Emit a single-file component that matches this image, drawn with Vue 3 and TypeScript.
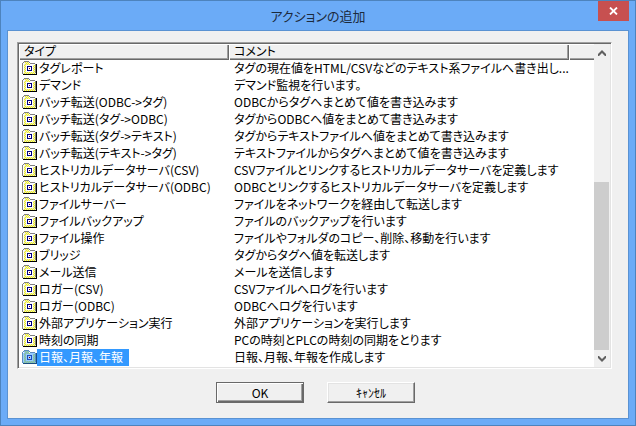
<script setup lang="ts">
import { ref } from 'vue'

interface ActionItem {
  name: string
  comment: string
}

const actions: ActionItem[] = [
  { name: 'タグレポート', comment: 'タグの現在値をHTML/CSVなどのテキスト系ファイルへ書き出し...' },
  { name: 'デマンド', comment: 'デマンド監視を行います。' },
  { name: 'バッチ転送(ODBC->タグ)', comment: 'ODBCからタグへまとめて値を書き込みます' },
  { name: 'バッチ転送(タグ->ODBC)', comment: 'タグからODBCへ値をまとめて書き込みます' },
  { name: 'バッチ転送(タグ->テキスト)', comment: 'タグからテキストファイルへ値をまとめて書き込みます' },
  { name: 'バッチ転送(テキスト->タグ)', comment: 'テキストファイルからタグへまとめて値を書き込みます' },
  { name: 'ヒストリカルデータサーバ(CSV)', comment: 'CSVファイルとリンクするヒストリカルデータサーバを定義します' },
  { name: 'ヒストリカルデータサーバ(ODBC)', comment: 'ODBCとリンクするヒストリカルデータサーバを定義します' },
  { name: 'ファイルサーバー', comment: 'ファイルをネットワークを経由して転送します' },
  { name: 'ファイルバックアップ', comment: 'ファイルのバックアップを行います' },
  { name: 'ファイル操作', comment: 'ファイルやフォルダのコピー、削除、移動を行います' },
  { name: 'ブリッジ', comment: 'タグからタグへ値を転送します' },
  { name: 'メール送信', comment: 'メールを送信します' },
  { name: 'ロガー(CSV)', comment: 'CSVファイルへログを行います' },
  { name: 'ロガー(ODBC)', comment: 'ODBCへログを行います' },
  { name: '外部アプリケーション実行', comment: '外部アプリケーションを実行します' },
  { name: '時刻の同期', comment: 'PCの時刻とPLCの時刻の同期をとります' },
  { name: '日報、月報、年報', comment: '日報、月報、年報を作成します' },
]

const selected = ref(actions.length - 1)
</script>

<template>
  <div class="window" role="dialog" aria-labelledby="dialog-title">
    <svg class="defs" width="0" height="0" aria-hidden="true">
      <defs>
        <pattern id="dither" width="2" height="2" patternUnits="userSpaceOnUse">
          <rect width="2" height="2" fill="#e0e0e0" />
          <rect width="1" height="1" fill="#ffff00" />
          <rect x="1" y="1" width="1" height="1" fill="#ffff00" />
        </pattern>
        <pattern id="dither-selected" width="2" height="2" patternUnits="userSpaceOnUse">
          <rect width="2" height="2" fill="#78b4e4" />
          <rect width="1" height="1" fill="#97cc80" />
          <rect x="1" y="1" width="1" height="1" fill="#97cc80" />
        </pattern>
      </defs>
    </svg>

    <header class="titlebar">
      <h1 id="dialog-title">アクションの追加</h1>
      <button type="button" class="close" aria-label="閉じる">
        <svg width="9" height="8" viewBox="0 0 9 8" aria-hidden="true">
          <path d="M1 .5 8 7.5M8 .5 1 7.5" stroke="#fff" stroke-width="1.8" />
        </svg>
      </button>
    </header>

    <main class="client">
      <div class="listview">
        <table>
          <colgroup>
            <col class="col-type" />
            <col />
            <col class="col-rest" />
          </colgroup>
          <thead>
            <tr>
              <th scope="col">タイプ</th>
              <th scope="col">コメント</th>
              <td></td>
            </tr>
          </thead>
          <tbody>
            <tr
              v-for="(item, i) in actions"
              :key="item.name"
              :class="{ selected: i === selected }"
              @click="selected = i"
            >
              <td>
                <div class="name">
                  <svg width="15" height="15" viewBox="0 0 15 15" shape-rendering="crispEdges" aria-hidden="true">
                    <path class="face" d="M2 1h5v2h7v10H1V3h1z" :fill="i === selected ? 'url(#dither-selected)' : 'url(#dither)'" />
                    <path class="edge" d="M2 0h5v1H2zM1 1h1v1H1zM7 1h1v1H7zM0 2h1v11H0zM8 2h5v1H8zM13 3h1v9h-1z" />
                    <path class="shine" d="M1 3h1v9H1zM2 2h1v1H2zM8 3h5v1H8z" />
                    <path class="dark" d="M14 3h1v11H1v-1h13z" />
                    <path class="hole" d="M4 4h7v7H4z" />
                    <path class="box" d="M5 5h5v5H5z" />
                    <path class="hole" d="M6 6h3v3H6z" />
                    <path class="dot" d="M7 7h1v1H7z" />
                  </svg>
                  <span class="label">{{ item.name }}</span>
                </div>
              </td>
              <td class="comment">{{ item.comment }}</td>
              <td></td>
            </tr>
          </tbody>
        </table>

        <div class="scrollbar">
          <button type="button" aria-label="上へスクロール">
            <svg width="8" height="6" viewBox="0 0 8 6" aria-hidden="true">
              <path d="M0 4 4 0 8 4V6H7L4 3 1 6H0z" fill="#606060" />
            </svg>
          </button>
          <div class="track"><div class="thumb"></div></div>
          <button type="button" aria-label="下へスクロール">
            <svg width="8" height="6" viewBox="0 0 8 6" aria-hidden="true">
              <path d="M0 2 4 6 8 2V0H7L4 3 1 0H0z" fill="#606060" />
            </svg>
          </button>
        </div>
      </div>

      <footer class="actions">
        <button type="button" class="push default">OK</button>
        <button type="button" class="push">ｷｬﾝｾﾙ</button>
      </footer>
    </main>
  </div>
</template>

<style>
body {
  margin: 0;
}
</style>

<style scoped>
.window {
  box-sizing: border-box;
  display: flex;
  flex-direction: column;
  min-height: 100vh;
  padding: 0 6px 6px;
  border: 1px solid #4d83bd;
  background: #6babf7;
  color: #000;
  font-family: "Noto Sans CJK JP", sans-serif;
  font-size: 12px;
  line-height: 15px;
  font-feature-settings: "palt";
}

.defs {
  position: absolute;
}

.titlebar {
  display: grid;
  grid-template-columns: 31px 1fr 31px;
  height: 29px;
}

h1 {
  grid-column: 2;
  margin: 0;
  text-align: center;
  font-size: 13px;
  font-weight: 400;
  line-height: 29px;
  color: #1c2a3c;
}

.close {
  display: flex;
  align-items: center;
  justify-content: center;
  height: 20px;
  padding: 0;
  border: 0;
  background: #c75050;
}

.client {
  flex: 1;
  display: flex;
  flex-direction: column;
  border: 1px solid #5a92d2;
  padding: 11px 16px 14px 9px;
  background: #f0f0f0;
}

.listview {
  display: flex;
  border: 1px solid;
  border-color: #a0a0a0 #fff #fff #a0a0a0;
  box-shadow: inset 1px 1px #696969, inset -1px -1px #e3e3e3;
  padding: 1px;
  background: #fff;
}

table {
  flex: 1;
  min-width: 0;
  margin-bottom: 1px;
  table-layout: fixed;
  border-collapse: collapse;
  align-self: flex-start;
}

.col-type {
  width: 210px;
}

.col-rest {
  width: 25px;
}

th,
td {
  box-sizing: border-box;
  padding: 0;
  height: 17px;
  text-align: left;
  font-weight: 400;
  white-space: nowrap;
}

tbody td {
  overflow: hidden;
}

thead th,
thead td {
  height: 16px;
  padding: 0 0 2px 5px;
  line-height: 14px;
  background: #f0f0f0;
  box-shadow: inset 1px 1px #fff, inset -1px -1px #696969, inset -2px -2px #a0a0a0;
}

thead td {
  box-shadow: inset 1px 1px #fff, inset 0 -1px #696969, inset 0 -2px #a0a0a0;
}

.name {
  display: flex;
  align-items: center;
  height: 17px;
  padding-left: 3px;
}

.name svg {
  flex: none;
}

.label {
  padding: 0 6px 2px 2px;
}

.comment {
  padding: 0 0 2px 5px;
}

.edge {
  fill: #808080;
}

.shine,
.hole {
  fill: #fff;
}

.dark {
  fill: #000;
}

.box {
  fill: #000080;
}

.dot {
  fill: #800000;
}

.selected .label {
  background: #3399ff;
  color: #fff;
}

.selected .edge {
  fill: #5a8cc0;
}

.selected .shine,
.selected .hole {
  fill: #99ccff;
}

.selected .dark {
  fill: #1a4d80;
}

.selected .box {
  fill: #1a4dc0;
}

.scrollbar {
  display: flex;
  flex-direction: column;
  width: 16px;
  background: #f0f0f0;
}

.scrollbar button {
  display: flex;
  align-items: center;
  justify-content: center;
  height: 17px;
  padding: 0;
  border: 0;
  background: #f0f0f0;
}

.track {
  flex: 1;
  display: flex;
  flex-direction: column;
  justify-content: flex-end;
}

.thumb {
  height: 58%;
  margin-right: 1px;
  background: #cdcdcd;
}

.actions {
  display: flex;
  justify-content: center;
  gap: 23px;
  padding: 13px 0 0 2px;
}

.push {
  width: 88px;
  height: 21px;
  padding: 0;
  border: 1px solid;
  border-color: #fff #696969 #696969 #fff;
  box-shadow: inset -1px -1px #a0a0a0, inset 1px 1px #e3e3e3;
  background: #f0f0f0;
  color: #000;
  font: inherit;
  line-height: 17px;
}

.default {
  border-color: #696969;
  box-shadow: inset 1px 1px #fff, inset -1px -1px #696969, inset -2px -2px #a0a0a0;
}
</style>
